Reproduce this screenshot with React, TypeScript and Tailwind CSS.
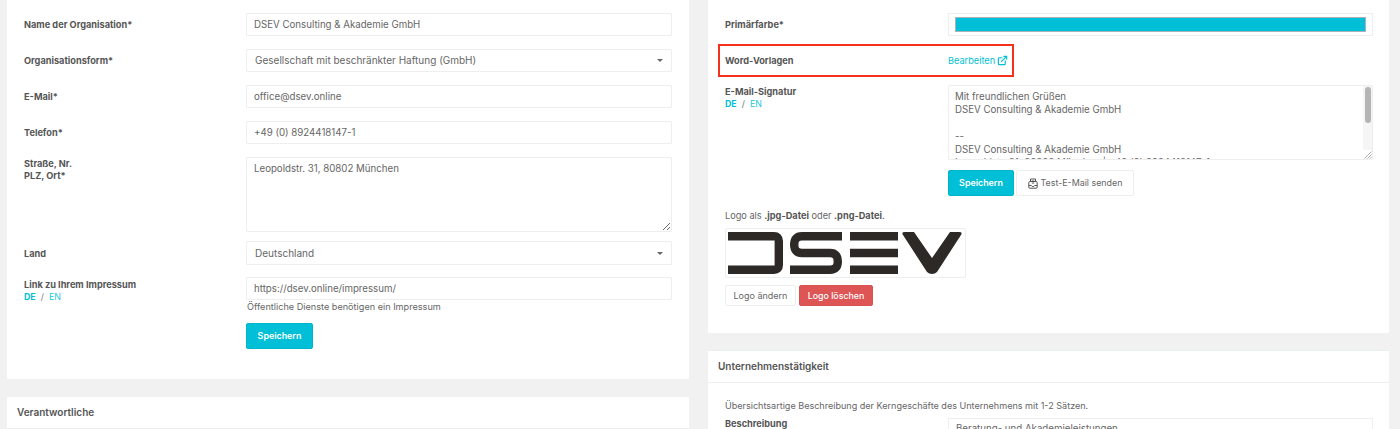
import React from "react";
import { ExternalLink } from "lucide-react";

const font = "font-['Inter','Noto_Sans',sans-serif]";

function Label({ children, wide = false }: { children: React.ReactNode; wide?: boolean }) {
  return <div className={`${wide ? "w-[223px]" : "w-[222px]"} shrink-0 text-[9.2px] leading-[12px] font-bold text-[#555]`}>{children}</div>;
}

function Lang() {
  return (
    <div className="text-[8.8px] leading-[12px]">
      <span className="font-bold text-[#00bfd6]">DE</span>
      <span className="text-[#777] font-normal mx-[5px]">/</span>
      <span className="text-[#22c7dc] font-normal">EN</span>
    </div>
  );
}

function Field({ value }: { value: string }) {
  return (
    <input
      readOnly
      value={value}
      className="block w-full h-[23px] bg-white border border-[#eeeeee] rounded-[1px] px-[7px] text-[9.7px] text-[#666] outline-none"
    />
  );
}

function Select({ value, tall = false }: { value: string; tall?: boolean }) {
  return (
    <div className={`flex items-center justify-between w-full ${tall ? "h-[24px]" : "h-[23px]"} bg-white border border-[#eeeeee] rounded-[1px] px-[8px] text-[10px] text-[#666]`}>
      <span>{value}</span>
      <span className="w-0 h-0 border-x-[3px] border-x-transparent border-t-[3px] border-t-[#666]" />
    </div>
  );
}

function Row({ label, children, center = true, className = "", wide = false }: { label: React.ReactNode; children: React.ReactNode; center?: boolean; className?: string; wide?: boolean }) {
  return (
    <div className={`flex ${center ? "items-center" : "items-start"} ${className}`}>
      <Label wide={wide}>{label}</Label>
      <div className="flex-1 min-w-0">{children}</div>
    </div>
  );
}

function PrimaryButton({ wide = false }: { wide?: boolean }) {
  return (
    <button className={`block h-[26px] ${wide ? "w-[67px]" : "w-[66px]"} bg-[#00bfd6] border border-[#00b4ca] rounded-[2px] text-white text-[8.9px] font-semibold`}>Speichern</button>
  );
}

function CardHeader({ title }: { title: string }) {
  return (
    <div className="h-[32px] flex items-center px-[10px] border-b border-[#eeeeee] text-[10px] font-semibold text-[#555]">{title}</div>
  );
}

function Logo() {
  return (
    <svg width="239" height="48" viewBox="0 0 239 48" fill="none" stroke="#2d2926" strokeWidth="8.4" className="block">
      <path d="M2 7.2H48Q52.8 7.2 52.8 12V36Q52.8 40.8 48 40.8H2" />
      <path d="M116 7.2H76Q68.2 7.2 68.2 15.6Q68.2 24 76 24H104Q111.8 24 111.8 32.4Q111.8 40.8 104 40.8H64" />
      <path d="M124 7.2H172M124 24H172M124 40.8H172" />
      <path stroke="none" fill="#2d2926" d="M179 3H188L206 29L224 3H233Q237 3 235 6L211 43Q209 45 206 45Q203 45 201 43L177 6Q175 3 179 3Z" />
    </svg>
  );
}

export default function App() {
  return (
    <div className={`${font} h-[429px] w-full overflow-hidden bg-[#f1f1f1] pl-[7px] pr-[11px] flex gap-[19px]`}>
      {/* left column */}
      <div className="w-[682px] shrink-0">
        <div className="bg-white h-[379px] pt-[13px] pl-[17px] pr-[17px]">
          <Row label="Name der Organisation*"><Field value="DSEV Consulting & Akademie GmbH" /></Row>
          <Row label="Organisationsform*" className="mt-[13px]"><Select value="Gesellschaft mit beschränkter Haftung (GmbH)" /></Row>
          <Row label="E-Mail*" className="mt-[13px]"><Field value="office@dsev.online" /></Row>
          <Row label="Telefon*" className="mt-[13px]"><Field value="+49 (0) 8924418147-1" /></Row>
          <Row
            center={false}
            className="mt-[13px]"
            label={<div className="pt-[1px]">Straße, Nr.<br />PLZ, Ort*</div>}
          >
            <textarea
              readOnly
              value="Leopoldstr. 31, 80802 München"
              className="block w-full h-[75px] bg-white border border-[#eeeeee] rounded-[1px] px-[7px] py-[4px] text-[9.7px] leading-[14px] text-[#666] outline-none"
            />
          </Row>
          <Row label={<div className="pt-[1px]">Land</div>} className="mt-[9px]"><Select tall value="Deutschland" /></Row>
          <Row
            center={false}
            className="mt-[12px]"
            label={<div className="pt-[2px]">Link zu Ihrem Impressum<Lang /></div>}
          >
            <Field value="https://dsev.online/impressum/" />
            <div className="text-[9.15px] leading-[12px] mt-[0.5px] text-[#666] pl-[1px]">Öffentliche Dienste benötigen ein Impressum</div>
            <div className="mt-[10.5px]"><PrimaryButton wide /></div>
          </Row>
        </div>
        <div className="mt-[18px] bg-white"><CardHeader title="Verantwortliche" /></div>
      </div>

      {/* right column */}
      <div className="w-[681px] shrink-0">
        <div className="bg-white h-[333px] pt-[13px] pl-[17px] pr-[16px]">
          <Row wide label="Primärfarbe*">
            <div className="h-[23px] border border-[#eeeeee] p-[3px_6px]">
              <div className="h-full bg-[#00bfd6] border border-[#aab4b8]" />
            </div>
          </Row>
          <div className="flex items-center w-[296px] h-[33px] mt-[8px] -ml-[7px] pl-[5px] border-2 border-[#f5301c]">
            <div className="w-[223px] shrink-0 text-[9.2px] font-bold text-[#555]">Word-Vorlagen</div>
            <span className="flex items-center gap-[2px] text-[9.2px] text-[#00bfd6]">
              Bearbeiten
              <ExternalLink size={11} strokeWidth={2.6} />
            </span>
          </div>
          <Row
            wide
            center={false}
            className="mt-[8px]"
            label={<div className="pt-[1px]">E-Mail-Signatur<Lang /></div>}
          >
            <div className="relative h-[75px] border border-[#eeeeee] overflow-hidden rounded-[1px]">
              <textarea
                readOnly
                value={"Mit freundlichen Grüßen\nDSEV Consulting & Akademie GmbH\n\n--\nDSEV Consulting & Akademie GmbH\nLeopoldstr. 31, 80802 München | +49 (0) 8924418147-1"}
                className="block w-full h-full bg-white px-[6px] py-[4px] text-[9.7px] leading-[13.3px] text-[#666] outline-none overflow-hidden resize-none"
              />
              <div className="absolute right-0 top-0 bottom-0 w-[9px] bg-[#f5f5f5]">
                <div className="mx-auto mt-[1px] w-[6px] h-[36px] rounded-[3px] bg-[#b5b5b5]" />
              </div>
              <svg width="9" height="9" viewBox="0 0 9 9" className="absolute right-0 bottom-0 bg-white" stroke="#999" strokeWidth="0.8">
                <path d="M8.5 1.5L1.5 8.5M8.5 4.5L4.5 8.5M8.5 7L7 8.5" />
              </svg>
            </div>
            <div className="flex gap-[2px] mt-[10px]">
              <PrimaryButton />
              <button className="h-[26px] w-[118px] flex items-center justify-center gap-[3px] bg-white border border-[#eeeeee] rounded-[2px] text-[8.9px] text-[#666]">
                <svg width="10" height="11" viewBox="0 0 10 11" fill="none" stroke="#555" strokeWidth="1">
                  <path d="M2.5 4V1H7.5V4" />
                  <rect x="0.8" y="3.5" width="8.4" height="6.7" rx="1" />
                  <path d="M0.8 7.5H3.3L4.2 8.5H5.8L6.7 7.5H9.2" />
                  <path d="M3.8 3H6.2M3.8 5H6.2" />
                </svg>
                Test-E-Mail senden
              </button>
            </div>
          </Row>
          <div className="text-[9.2px] leading-[12px] mt-[14px] text-[#666]">
            Logo als <b className="text-[#555]">.jpg-Datei</b> oder <b className="text-[#555]">.png-Datei</b>.
          </div>
          <div className="w-[241px] h-[50px] mt-[6px] border border-[#eeeeee] rounded-[2px] overflow-hidden">
            <Logo />
          </div>
          <div className="flex gap-[3px] mt-[7px]">
            <button className="h-[21px] w-[71px] bg-white border border-[#eeeeee] rounded-[2px] text-[9px] text-[#666]">Logo ändern</button>
            <button className="h-[21px] w-[74px] bg-[#dd5555] border border-[#d9534f] rounded-[2px] text-[8.8px] text-white font-medium">Logo löschen</button>
          </div>
        </div>
        <div className="mt-[17px] bg-white h-[79px] border-t border-[#e8edf0]">
          <CardHeader title="Unternehmenstätigkeit" />
          <div className="pl-[17px] pr-[16px]">
            <div className="text-[9.05px] leading-[12px] mt-[17px] text-[#666]">Übersichtsartige Beschreibung der Kerngeschäfte des Unternehmens mit 1-2 Sätzen.</div>
            <Row wide center={false} className="mt-[6px]" label="Beschreibung">
              <div className="h-[40px] border border-[#eeeeee] px-[7px] pt-[3px] text-[9.7px] leading-[14px] text-[#666]">Beratung- und Akademieleistungen</div>
            </Row>
          </div>
        </div>
      </div>
    </div>
  );
}
